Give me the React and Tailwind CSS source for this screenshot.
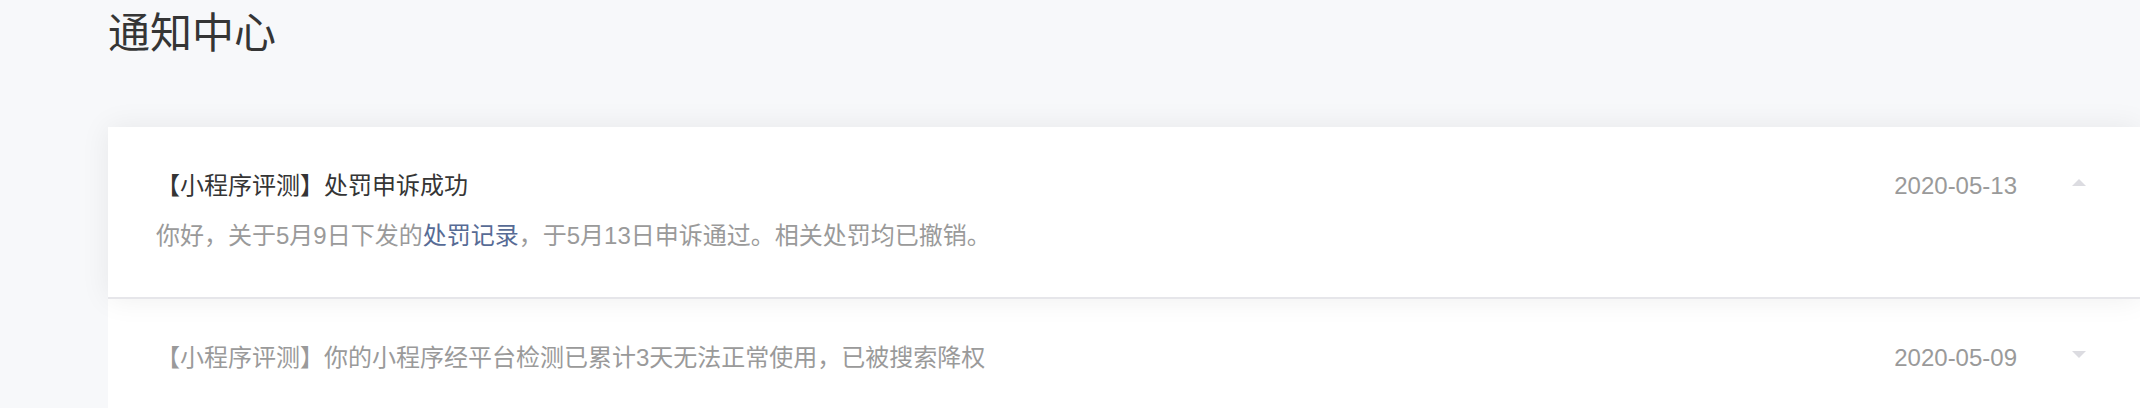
import React from "react";

const FONT = { fontFamily: '"Liberation Sans", "Noto Sans CJK SC", sans-serif' };

function Arrow({ up }) {
  return up ? (
    <span className="mb-[7px] ml-[55px] block h-0 w-0 border-x-[7px] border-b-[7px] border-x-transparent border-b-[#dcdce1]" />
  ) : (
    <span className="mb-[7px] ml-[55px] block h-0 w-0 border-x-[7px] border-t-[7px] border-x-transparent border-t-[#dcdce1]" />
  );
}

export default function App() {
  return (
    <div className="min-h-[408px] w-full overflow-hidden bg-[#f7f8fa]" style={FONT}>
      <div className="pl-[108px]">
        <h1 className="pt-[13px] text-[42px] leading-[42px] font-normal text-[#353535]">通知中心</h1>
        <div className="mt-[72px] flex flex-col">
          <div className="relative z-10 border-b-2 border-[#e6e6ea] bg-white pt-[43px] pb-[45px] pl-[48px] pr-[54px] shadow-[0_0_28px_rgba(0,0,0,0.07)]">
            <div className="flex items-center">
              <div className="flex-1 text-[24px] leading-[32px] text-[#353535]">【小程序评测】处罚申诉成功</div>
              <div className="text-[24px] leading-[32px] text-[#9a9a9a]">2020-05-13</div>
              <Arrow up />
            </div>
            <div className="mt-[18px] text-[24px] leading-[32px] text-[#9a9a9a]">
              你好，关于5月9日下发的<span className="text-[#576b95]">处罚记录</span>，于5月13日申诉通过。相关处罚均已撤销。
            </div>
          </div>
          <div className="bg-white pt-[43px] pb-[45px] pl-[48px] pr-[54px]">
            <div className="flex items-center">
              <div className="flex-1 text-[24px] leading-[32px] text-[#9a9a9a]">【小程序评测】你的小程序经平台检测已累计3天无法正常使用，已被搜索降权</div>
              <div className="text-[24px] leading-[32px] text-[#9a9a9a]">2020-05-09</div>
              <Arrow />
            </div>
          </div>
        </div>
      </div>
    </div>
  );
}
